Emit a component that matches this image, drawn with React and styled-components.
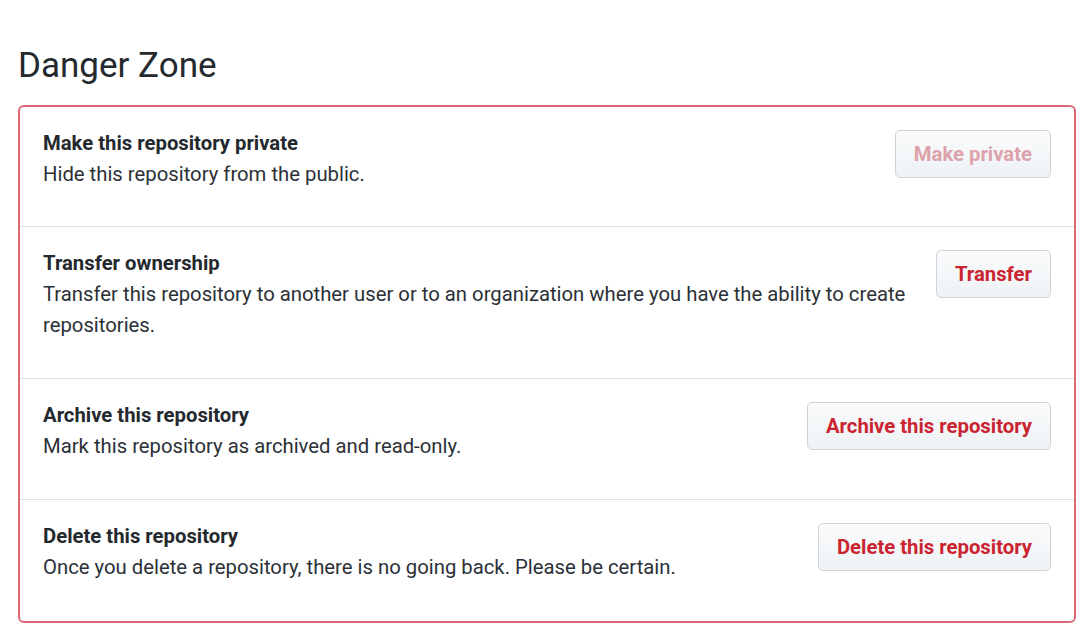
import React from 'react'
import styled, { createGlobalStyle } from 'styled-components'

const GlobalStyle = createGlobalStyle`
  * { box-sizing: border-box; }
  body {
    margin: 0;
    background: #fff;
    font-family: Roboto, "Liberation Sans", Arial, sans-serif;
    color: #24292e;
  }
`

const Page = styled.div`
  padding: 45px 4px 0 18px;
`

const Heading = styled.h2`
  margin: 0 0 18px;
  font-size: 35px;
  line-height: 42px;
  font-weight: 400;
  color: #24292e;
`

const DangerBox = styled.div`
  border: 2px solid #d96a75;
  border-radius: 6px;
  background: #fff;
`

const Row = styled.div`
  display: flex;
  align-items: flex-start;
  padding: 21px 23px 23px 23px;
  border-top: 1px solid #dfe2e5;

  &:first-child {
    border-top: none;
    padding-bottom: 22px;
  }

  &:last-child {
    padding-bottom: 24px;
  }
`

const Info = styled.div`
  flex: 1;
  margin-right: 12px;
`

const Title = styled.strong`
  display: block;
  font-size: 20.3px;
  line-height: 31px;
  font-weight: 700;
  color: #24292e;
`

const Desc = styled.p`
  margin: 0 0 14px;
  font-size: 20.3px;
  line-height: 31px;
  color: #2b3137;
`

const Button = styled.button`
  margin-top: 2px;
  flex-shrink: 0;
  height: 48px;
  padding: 0 18px;
  font-family: inherit;
  font-size: 20.3px;
  font-weight: 700;
  line-height: 28px;
  color: ${(p) => (p.disabled ? '#dea2aa' : '#cb2431')};
  background: linear-gradient(-180deg, #fafbfc 0%, #eff3f6 90%);
  border: 1.5px solid #d1d5da;
  border-radius: 5px;
  white-space: nowrap;
  cursor: ${(p) => (p.disabled ? 'default' : 'pointer')};
`

const items = [
  {
    title: 'Make this repository private',
    desc: 'Hide this repository from the public.',
    action: 'Make private',
    disabled: true,
  },
  {
    title: 'Transfer ownership',
    desc: 'Transfer this repository to another user or to an organization where you have the ability to create repositories.',
    action: 'Transfer',
  },
  {
    title: 'Archive this repository',
    desc: 'Mark this repository as archived and read-only.',
    action: 'Archive this repository',
  },
  {
    title: 'Delete this repository',
    desc: 'Once you delete a repository, there is no going back. Please be certain.',
    action: 'Delete this repository',
  },
]

const App = () => {
  return (
    <>
      <GlobalStyle />
      <Page>
        <Heading>Danger Zone</Heading>
        <DangerBox>
          {items.map((item) => (
            <Row key={item.title}>
              <Info>
                <Title>{item.title}</Title>
                <Desc>{item.desc}</Desc>
              </Info>
              <Button disabled={item.disabled}>{item.action}</Button>
            </Row>
          ))}
        </DangerBox>
      </Page>
    </>
  )
}

export default App
